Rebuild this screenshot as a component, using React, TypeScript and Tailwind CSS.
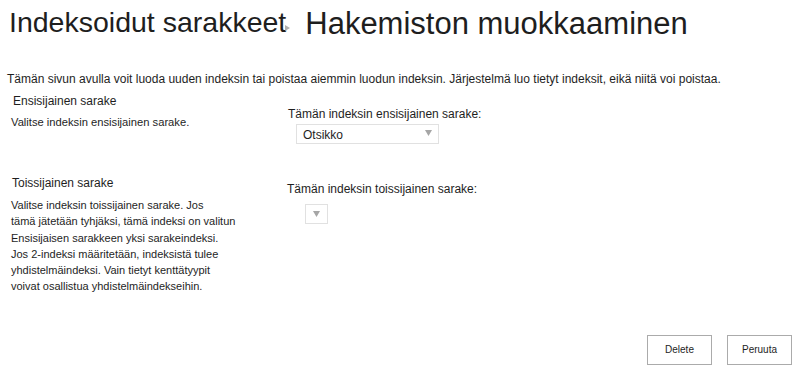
import React from "react";

function Caret() {
  return (
    <svg width="7" height="6" viewBox="0 0 7 6" className="block">
      <path d="M0 0 L7 0 L3.5 6 Z" fill="#a6a6a6" />
    </svg>
  );
}

export default function App() {
  const desc2 = [
    "Valitse indeksin toissijainen sarake. Jos",
    "tämä jätetään tyhjäksi, tämä indeksi on valitun",
    "Ensisijaisen sarakkeen yksi sarakeindeksi.",
    "Jos 2-indeksi määritetään, indeksistä tulee",
    "yhdistelmäindeksi. Vain tietyt kenttätyypit",
    "voivat osallistua yhdistelmäindekseihin.",
  ];
  return (
    <div className="w-[800px] h-[378px] overflow-hidden bg-white text-[#1e1e1e] font-['Liberation_Sans',Arial,sans-serif]">
      {/* header */}
      <div className="flex items-start pt-[6px]">
        <div className="ml-[9px] text-[28.5px] leading-[32px] whitespace-nowrap">Indeksoidut sarakkeet</div>
        <div className="-ml-[1px] mt-[19px]">
          <svg width="5" height="6" viewBox="0 0 5 6" className="block">
            <path d="M0 0 L5 3 L0 6 Z" fill="#b0b0b0" />
          </svg>
        </div>
        <div className="ml-[15px] text-[31px] leading-[36px] whitespace-nowrap">Hakemiston muokkaaminen</div>
      </div>

      {/* intro */}
      <div className="mt-[29px] pl-[7px] text-[12px] leading-[16px] whitespace-nowrap">
        Tämän sivun avulla voit luoda uuden indeksin tai poistaa aiemmin luodun indeksin. Järjestelmä luo tietyt indeksit, eikä niitä voi poistaa.
      </div>

      {/* row 1 */}
      <div className="flex mt-[6px] h-[82px]">
        <div className="w-[288px] shrink-0">
          <div className="pl-[13px] text-[12px] leading-[16px]">Ensisijainen sarake</div>
          <div className="mt-[5px] pl-[11px] text-[11.2px] leading-[16px]">Valitse indeksin ensisijainen sarake.</div>
        </div>
        <div className="pt-[13px]">
          <div className="text-[12px] leading-[16px] whitespace-nowrap">Tämän indeksin ensisijainen sarake:</div>
          <div className="mt-[2px] ml-[8px] w-[143px] h-[20px] border border-[#e1e1e1] flex items-start justify-between pl-[6px] pr-[6px]">
            <span className="text-[12px] leading-[16px] pt-[2px]">Otsikko</span>
            <span className="pt-[5px]"><Caret /></span>
          </div>
        </div>
      </div>

      {/* row 2 */}
      <div className="flex">
        <div className="w-[287px] shrink-0">
          <div className="pl-[12px] text-[12px] leading-[16px]">Toissijainen sarake</div>
          <div className="mt-[6px] pl-[11px] text-[11px] leading-[16.3px] whitespace-nowrap">
            {desc2.map((l) => (
              <div key={l}>{l}</div>
            ))}
          </div>
        </div>
        <div className="pt-[6px]">
          <div className="text-[12px] leading-[16px] whitespace-nowrap">Tämän indeksin toissijainen sarake:</div>
          <div className="mt-[7px] ml-[18px] w-[23px] h-[20px] border border-[#e1e1e1] flex items-start justify-center pt-[6px]">
            <Caret />
          </div>
        </div>
      </div>

      {/* buttons */}
      <div className="flex justify-end gap-[15px] pr-[8px] mt-[40px]">
        <button className="w-[65px] h-[30px] border border-[#ababab] bg-white text-[10px] leading-[14px] text-[#1e1e1e]">Delete</button>
        <button className="w-[65px] h-[30px] border border-[#ababab] bg-white text-[10px] leading-[14px] text-[#1e1e1e]">Peruuta</button>
      </div>
    </div>
  );
}
